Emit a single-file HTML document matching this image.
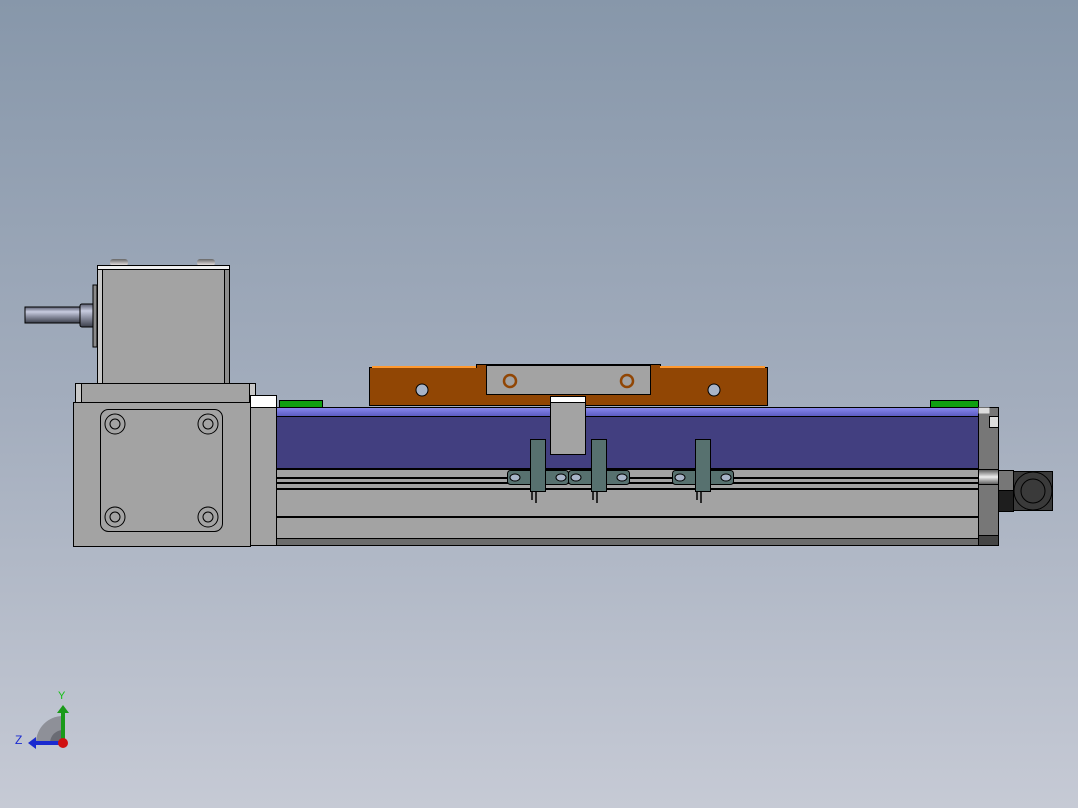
<!DOCTYPE html>
<html><head><meta charset="utf-8"><style>
html,body{margin:0;padding:0;width:1078px;height:808px;overflow:hidden}
svg{display:block}
</style></head><body>
<svg width="1078" height="808" viewBox="0 0 1078 808" xmlns="http://www.w3.org/2000/svg">
<defs>
<linearGradient id="bg" x1="0" y1="0" x2="0" y2="1">
<stop offset="0" stop-color="#8797aa"/><stop offset="0.5" stop-color="#a3adbd"/><stop offset="1" stop-color="#c6cad5"/>
</linearGradient>
<linearGradient id="shaft" x1="0" y1="0" x2="0" y2="1">
<stop offset="0" stop-color="#5a5e70"/><stop offset="0.3" stop-color="#c8cce0"/><stop offset="0.6" stop-color="#8a8ea0"/><stop offset="1" stop-color="#3a3e4a"/>
</linearGradient>
<linearGradient id="bstripe" x1="0" y1="0" x2="0" y2="1">
<stop offset="0" stop-color="#8a8af0"/><stop offset="1" stop-color="#5a5ac0"/>
</linearGradient>
<linearGradient id="metal" x1="0" y1="0" x2="0" y2="1">
<stop offset="0" stop-color="#555"/><stop offset="0.5" stop-color="#eee"/><stop offset="1" stop-color="#555"/>
</linearGradient>
<linearGradient id="bolt" x1="0" y1="0" x2="0" y2="1">
<stop offset="0" stop-color="#666"/><stop offset="1" stop-color="#f4eeee"/>
</linearGradient>
</defs>
<rect width="1078" height="808" fill="url(#bg)"/>
<g stroke="#000" stroke-width="1">
<rect x="25" y="307" width="56" height="16" fill="url(#shaft)"/>
<rect x="80" y="304" width="17" height="23" rx="2" fill="url(#shaft)"/>
<rect x="93" y="285" width="4" height="62" fill="#8a8a8a"/>
<rect x="110" y="259" width="18" height="7" rx="3" fill="url(#bolt)" stroke="none"/>
<rect x="197" y="259" width="18" height="7" rx="3" fill="url(#bolt)" stroke="none"/>
<rect x="97.5" y="265.5" width="132" height="118" fill="#a3a3a3"/>
<rect x="97.5" y="265.5" width="132" height="4" fill="#f0f0f0"/>
<rect x="97.5" y="269.5" width="5" height="114" fill="#c8c8c8"/>
<rect x="224.5" y="269.5" width="5" height="114" fill="#8e8e8e"/>
<rect x="75.5" y="383.5" width="180" height="20" fill="#a3a3a3"/>
<rect x="75.5" y="383.5" width="6" height="20" fill="#c8c8c8"/>
<rect x="249.5" y="383.5" width="6" height="20" fill="#c8c8c8"/>
<rect x="73.5" y="402.5" width="177" height="144" fill="#a3a3a3"/>
<rect x="100.5" y="409.5" width="122" height="122" rx="8" fill="none"/>
<g fill="none">
<circle cx="115" cy="424" r="10"/><circle cx="115" cy="424" r="5"/>
<circle cx="208" cy="424" r="10"/><circle cx="208" cy="424" r="5"/>
<circle cx="115" cy="517" r="10"/><circle cx="115" cy="517" r="5"/>
<circle cx="208" cy="517" r="10"/><circle cx="208" cy="517" r="5"/>
</g>
<rect x="250.5" y="395.5" width="26" height="150" fill="#a3a3a3"/>
<rect x="250.5" y="395.5" width="26" height="12" fill="#fff"/>
<rect x="279.5" y="400.5" width="43" height="8" fill="#10a010"/>
<rect x="930.5" y="400.5" width="48" height="8" fill="#10a010"/>
<rect x="276.5" y="407.5" width="702" height="138" fill="#a3a3a3"/>
<rect x="276.5" y="407.5" width="702" height="9" fill="url(#bstripe)"/>
<rect x="276.5" y="416.5" width="702" height="52" fill="#423f80"/>
<g stroke-width="2">
<line x1="276" y1="469" x2="978" y2="469"/>
<line x1="276" y1="478" x2="978" y2="478"/>
<line x1="276" y1="483" x2="978" y2="483"/>
<line x1="276" y1="489" x2="978" y2="489"/>
<line x1="276" y1="517" x2="978" y2="517"/>
</g>
<rect x="276.5" y="538.5" width="702" height="7" fill="#6c6c6c"/>
<rect x="978.5" y="407.5" width="20" height="138" fill="#777"/>
<rect x="978.5" y="407.5" width="11" height="6" fill="#ddd" stroke="none"/>
<rect x="989.5" y="416.5" width="9" height="11" fill="#ddd"/>
<rect x="978.5" y="469.5" width="20" height="15" fill="url(#metal)"/>
<rect x="978.5" y="535.5" width="20" height="10" fill="#444"/>
<rect x="998.5" y="470.5" width="15" height="20" fill="#777"/>
<rect x="998.5" y="490.5" width="15" height="21" fill="#1e1e1e"/>
<rect x="1013.5" y="471.5" width="39" height="39" fill="#3a3a3a"/>
<circle cx="1033" cy="491" r="19" fill="#3a3a3a"/>
<circle cx="1033" cy="491" r="12" fill="none"/>
<path d="M369.5 367.5 H476.5 V364.5 H660.5 V367.5 H767.5 V405.5 H369.5 Z" fill="#914604"/>
<line x1="372" y1="367" x2="476" y2="367" stroke="#ff9a30" stroke-width="2"/>
<line x1="660" y1="367" x2="765" y2="367" stroke="#ff9a30" stroke-width="2"/>
<rect x="486.5" y="365.5" width="164" height="29" fill="#a3a3a3"/>
<circle cx="422" cy="390" r="6" fill="#a8b4c8"/>
<circle cx="714" cy="390" r="6" fill="#a8b4c8"/>
<circle cx="510" cy="381" r="6" fill="#a3a3a3"/>
<circle cx="510" cy="381" r="6" fill="none" stroke="#914604" stroke-width="2.5"/>
<circle cx="627" cy="381" r="6" fill="#a3a3a3"/>
<circle cx="627" cy="381" r="6" fill="none" stroke="#914604" stroke-width="2.5"/>
<rect x="550.5" y="396.5" width="35" height="7" fill="#fff"/>
<rect x="550.5" y="402.5" width="35" height="52" fill="#a3a3a3"/>
<g fill="#57716f">
<rect x="507.5" y="470.5" width="61" height="14" rx="3"/>
<rect x="568.5" y="470.5" width="61" height="14" rx="3"/>
<rect x="672.5" y="470.5" width="61" height="14" rx="3"/>
</g>
<g fill="#a8b4c8">
<ellipse cx="515" cy="477.5" rx="5" ry="3.5"/><ellipse cx="561" cy="477.5" rx="5" ry="3.5"/>
<ellipse cx="576" cy="477.5" rx="5" ry="3.5"/><ellipse cx="622" cy="477.5" rx="5" ry="3.5"/>
<ellipse cx="680" cy="477.5" rx="5" ry="3.5"/><ellipse cx="726" cy="477.5" rx="5" ry="3.5"/>
</g>
<g fill="#57716f">
<rect x="530.5" y="439.5" width="15" height="52"/>
<rect x="591.5" y="439.5" width="15" height="52"/>
<rect x="695.5" y="439.5" width="15" height="52"/>
</g>
<g stroke-width="1.5">
<line x1="532" y1="492" x2="532" y2="500"/><line x1="536" y1="492" x2="536" y2="503"/>
<line x1="593" y1="492" x2="593" y2="500"/><line x1="597" y1="492" x2="597" y2="503"/>
<line x1="697" y1="492" x2="697" y2="500"/><line x1="701" y1="492" x2="701" y2="503"/>
</g>
</g>
<path d="M36 743 A27 27 0 0 1 63 716 V743 Z" fill="#8e9098"/>
<path d="M50 743 A13 13 0 0 1 63 730 V743 Z" fill="#6a6c74"/>
<rect x="61" y="712" width="4" height="31" fill="#1a9a1a"/>
<path d="M57 713 L63 705 L69 713 Z" fill="#1a9a1a"/>
<rect x="36" y="741" width="27" height="4" fill="#1a2ad0"/>
<path d="M36 737 L28 743 L36 749 Z" fill="#1a2ad0"/>
<circle cx="63" cy="743" r="5" fill="#d01010"/>
<text x="58" y="699" font-family="Liberation Sans, sans-serif" font-size="11" fill="#10c010">Y</text>
<text x="15" y="744" font-family="Liberation Sans, sans-serif" font-size="12" fill="#1a2ad0">Z</text>
</svg>
</body></html>
